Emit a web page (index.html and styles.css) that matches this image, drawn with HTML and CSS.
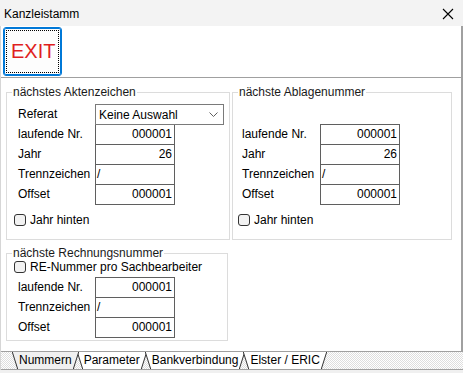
FILE: index.html
```html
<!DOCTYPE html>
<html>
  <head>
    <title>Kanzleistamm</title>
    <link rel="stylesheet" href="styles.css">
  </head>
  <body>
    <div class="window">
      <div class="titlebar">
        <span class="title">Kanzleistamm</span>
        <svg class="close" width="12" height="12" viewBox="0 0 12 12">
          <path d="M1 1 L11 11 M11 1 L1 11" stroke="#000" stroke-width="1.1" fill="none" />
        </svg>
      </div>

      <div class="client">
        <div class="toolbar">
          <button class="exit-btn" type="button"><span class="focus">EXIT</span></button>
        </div>

        <div class="page">
          <div class="top-row">
            <fieldset class="group" id="akten">
              <legend>nächstes Aktenzeichen</legend>
              <div class="group-body">
                <div class="fields">
                  <label>Referat</label>
                  <div class="select">
                    <span>Keine Auswahl</span>
                    <svg width="9" height="5" viewBox="0 0 9 5">
                      <path d="M0.5 0.5 L4.5 4.5 L8.5 0.5" stroke="#606060" fill="none" />
                    </svg>
                  </div>
                  <label>laufende Nr.</label>
                  <div class="edit num">000001</div>
                  <label>Jahr</label>
                  <div class="edit num">26</div>
                  <label>Trennzeichen</label>
                  <div class="edit">/</div>
                  <label>Offset</label>
                  <div class="edit num">000001</div>
                </div>
                <div class="check"><span class="box"></span>Jahr hinten</div>
              </div>
            </fieldset>

            <fieldset class="group" id="ablage">
              <legend>nächste Ablagenummer</legend>
              <div class="group-body">
                <div class="fields">
                  <span class="spacer"></span>
                  <span class="spacer"></span>
                  <label>laufende Nr.</label>
                  <div class="edit num">000001</div>
                  <label>Jahr</label>
                  <div class="edit num">26</div>
                  <label>Trennzeichen</label>
                  <div class="edit">/</div>
                  <label>Offset</label>
                  <div class="edit num">000001</div>
                </div>
                <div class="check"><span class="box"></span>Jahr hinten</div>
              </div>
            </fieldset>
          </div>

          <fieldset class="group" id="rechnung">
            <legend>nächste Rechnungsnummer</legend>
            <div class="group-body">
              <div class="check first"><span class="box"></span>RE-Nummer pro Sachbearbeiter</div>
              <div class="fields">
                <label>laufende Nr.</label>
                <div class="edit num">000001</div>
                <label>Trennzeichen</label>
                <div class="edit">/</div>
                <label>Offset</label>
                <div class="edit num">000001</div>
              </div>
            </div>
          </fieldset>
        </div>

        <div class="tabs">
          <div class="tab active">
            <svg class="edge" width="6" height="17" viewBox="0 0 6 17"><polygon points="0,0 6,0 6,17" class="fill" /><path d="M0.3 0 L5.7 17" /></svg>
            <span class="tab-label">Nummern</span>
            <svg class="edge" width="6" height="17" viewBox="0 0 6 17"><polygon points="0,0 6,0 0,17" class="fill" /><path d="M5.7 0 L0.3 17" /></svg>
          </div>
          <div class="tab">
            <svg class="edge" width="6" height="17" viewBox="0 0 6 17"><polygon points="0,0 6,0 6,17" class="fill" /><path d="M0.3 0 L5.7 17" /></svg>
            <span class="tab-label">Parameter</span>
            <svg class="edge" width="6" height="17" viewBox="0 0 6 17"><polygon points="0,0 6,0 0,17" class="fill" /><path d="M5.7 0 L0.3 17" /></svg>
          </div>
          <div class="tab">
            <svg class="edge" width="6" height="17" viewBox="0 0 6 17"><polygon points="0,0 6,0 6,17" class="fill" /><path d="M0.3 0 L5.7 17" /></svg>
            <span class="tab-label">Bankverbindung</span>
            <svg class="edge" width="6" height="17" viewBox="0 0 6 17"><polygon points="0,0 6,0 0,17" class="fill" /><path d="M5.7 0 L0.3 17" /></svg>
          </div>
          <div class="tab">
            <svg class="edge" width="6" height="17" viewBox="0 0 6 17"><polygon points="0,0 6,0 6,17" class="fill" /><path d="M0.3 0 L5.7 17" /></svg>
            <span class="tab-label">Elster / ERIC</span>
            <svg class="edge" width="6" height="17" viewBox="0 0 6 17"><polygon points="0,0 6,0 0,17" class="fill" /><path d="M5.7 0 L0.3 17" /></svg>
          </div>
        </div>
      </div>
    </div>
  </body>
</html>
```

FILE: styles.css
```css
html,
body {
  margin: 0;
  padding: 0;
  background: #ffffff;
}

body {
  font-family: "Liberation Sans", Arial, sans-serif;
  font-size: 12px;
  color: #000;
}

.window {
  width: 463px;
  height: 373px;
  overflow: hidden;
  background: #f0f0f0;
}

.titlebar {
  height: 26px;
  display: flex;
  align-items: center;
  justify-content: space-between;
  background: #f3f3f3;
  padding: 0 9px 0 4px;
  box-sizing: border-box;
}

.title {
  font-size: 12px;
  margin-top: 1px;
}

.close {
  margin-top: 1px;
}

.client {
  background: #ffffff;
  border-left: 1px solid #d6d6d6;
  height: 344px;
}

.toolbar {
  height: 52px;
  border-bottom: 1px solid #a0a0a0;
  border-right: 2px solid #a0a0a0;
  box-sizing: border-box;
  padding: 1px 0 0 2px;
}

.exit-btn {
  width: 59px;
  height: 49px;
  margin: 0;
  padding: 2px;
  border: 1px solid #0078d7;
  border-radius: 3px;
  box-shadow: inset 0 0 0 1px #0078d7;
  background: #fdfdfd;
  font-family: "Liberation Sans", Arial, sans-serif;
  font-size: 20px;
  color: #e01f1f;
  display: flex;
}

.exit-btn .focus {
  flex: 1;
  display: flex;
  align-items: center;
  padding-left: 4px;
  border: 1px dotted #000;
}

.page {
  border-right: 2px solid #a0a0a0;
  height: 273px;
  padding: 7px 0 0 5px;
  box-sizing: border-box;
}

.top-row {
  display: flex;
  gap: 2px;
}

.group {
  margin: 0;
  padding: 0;
  min-width: 0;
  border: 1px solid #dcdcdc;
}

.group legend {
  padding: 0 1px;
  margin-left: 5px;
  line-height: 14px;
  color: #1a1a1a;
}

.group-body {
  padding: 5px 0 12px 11px;
}

#akten {
  width: 224px;
  box-sizing: border-box;
}

#ablage {
  width: 220px;
  box-sizing: border-box;
}

#ablage .group-body {
  padding-left: 9px;
}

#ablage .fields {
  grid-template-columns: 78px 80px;
}

#ablage .check {
  margin-left: -4px;
}

#rechnung {
  width: 222px;
  box-sizing: border-box;
  margin-top: 6px;
}

#rechnung .group-body {
  padding: 0 0 3px 11px;
}

#rechnung .fields {
  margin-top: 3px;
}

.fields {
  display: grid;
  grid-template-columns: 77px auto;
  grid-auto-rows: 20px;
  justify-items: start;
}

.fields label {
  line-height: 20px;
  white-space: nowrap;
}

.edit {
  width: 80px;
  height: 21px;
  box-sizing: border-box;
  border: 1px solid #5f5f5f;
  line-height: 19px;
  padding: 0 2px 0 1px;
  background: #fff;
}

.edit.num {
  text-align: right;
}

.select {
  width: 129px;
  height: 21px;
  box-sizing: border-box;
  border: 1px solid #7a7a7a;
  padding: 0 5px 0 3px;
  display: flex;
  align-items: center;
  justify-content: space-between;
  background: #fff;
  position: relative;
  z-index: 1;
}

.check {
  display: flex;
  align-items: center;
  gap: 4px;
  height: 14px;
  margin-top: 9px;
  margin-left: -4px;
}

.check.first {
  margin-top: 0;
}

.box {
  width: 12px;
  height: 12px;
  box-sizing: border-box;
  border: 1px solid #333;
  border-radius: 3px;
  background: #f2f2f2;
}

.tabs {
  height: 19px;
  box-sizing: border-box;
  border-top: 1px solid #a0a0a0;
  border-bottom: 1px solid #a0a0a0;
  padding-left: 11px;
  display: flex;
  background-color: #ffffff;
  background-image: conic-gradient(#dedede 25%, #ffffff 0 50%, #dedede 0 75%, #ffffff 0);
  background-size: 2px 2px;
}

.tab {
  display: flex;
  height: 17px;
  margin-left: -2px;
  --tab-bg: #ffffff;
}

.tab:first-child {
  margin-left: 0;
}

.tab.active {
  --tab-bg: #f0f0f0;
  position: relative;
  z-index: 1;
}

.tab-label {
  background: var(--tab-bg);
  line-height: 17px;
  padding: 0 1px;
}

.edge .fill {
  fill: var(--tab-bg);
}

.edge path {
  stroke: #333;
  stroke-width: 1;
  fill: none;
}
```
